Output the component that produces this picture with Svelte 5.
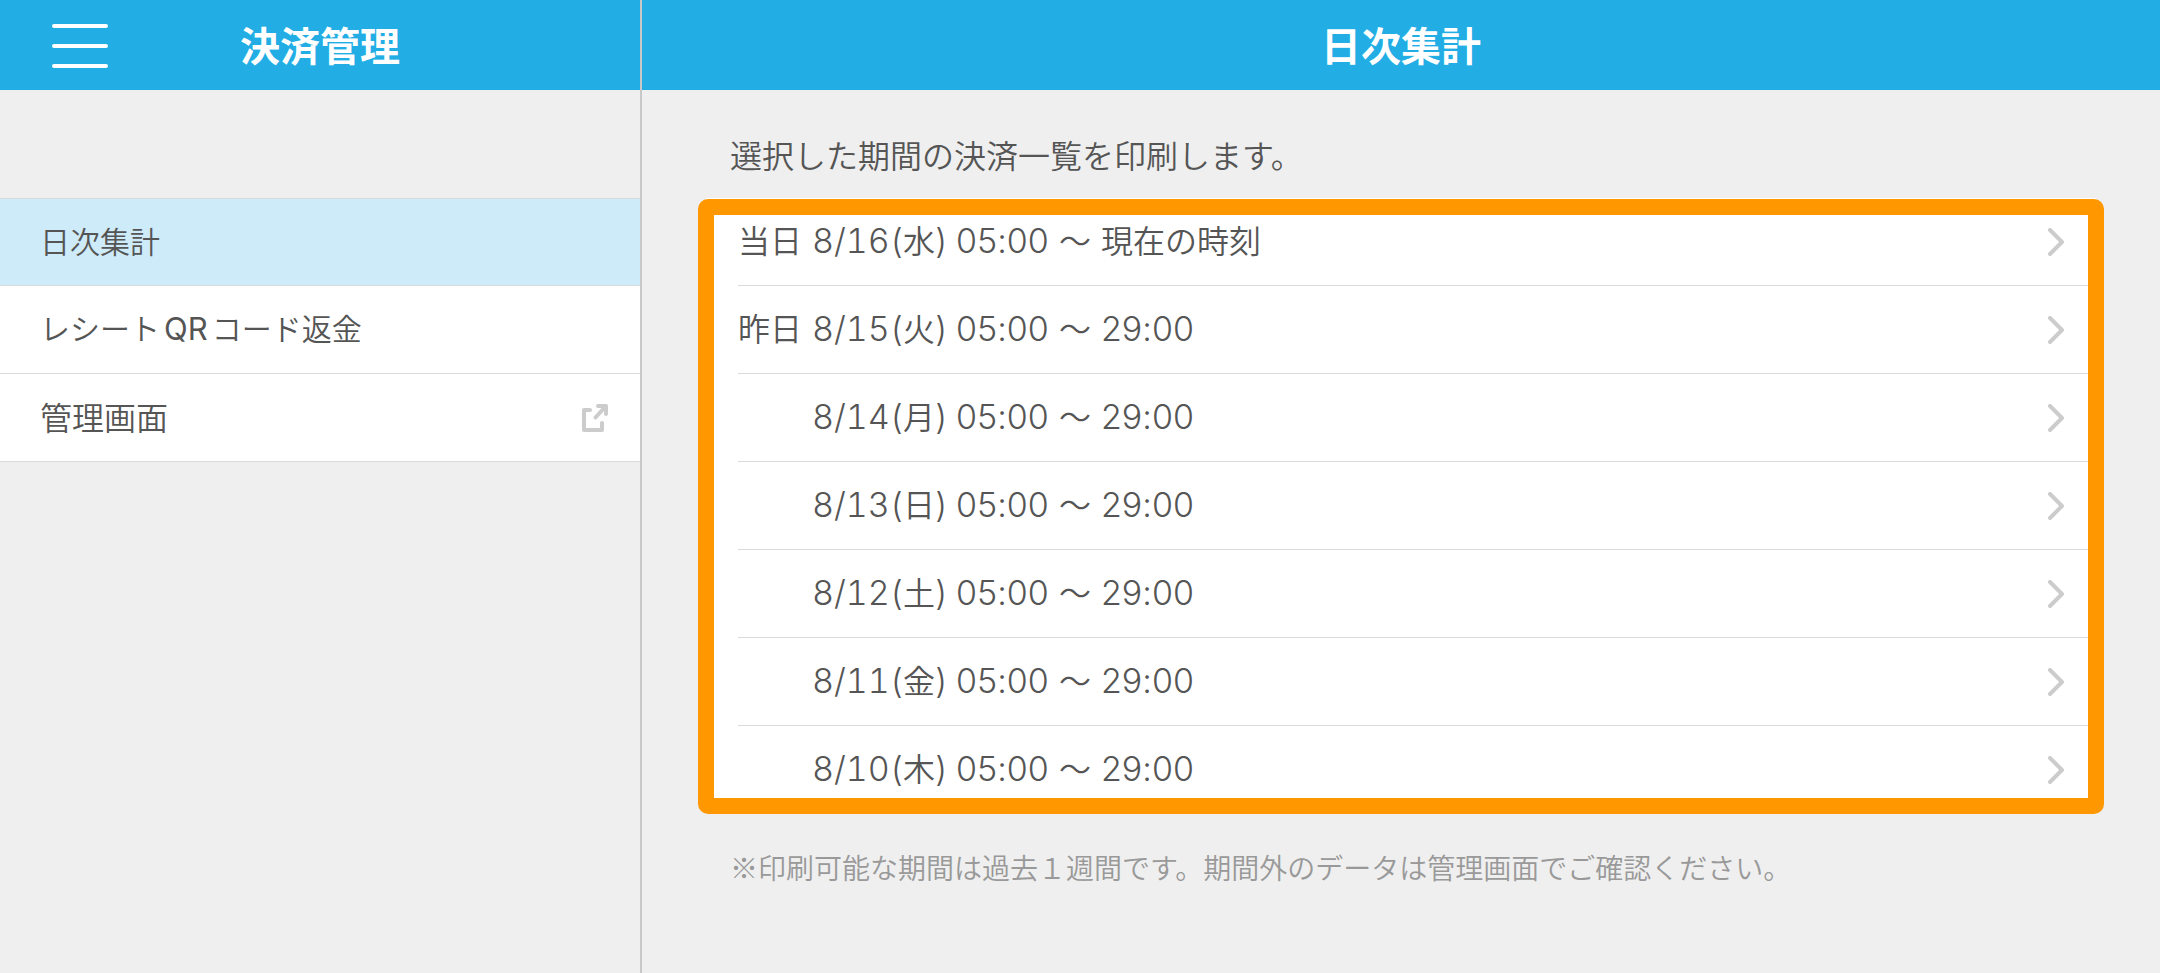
<script>
  const periods = [
    { label: '当日', date: '8/16', day: '水', to: '現在の時刻', now: true },
    { label: '昨日', date: '8/15', day: '火', to: '29:00' },
    { label: '', date: '8/14', day: '月', to: '29:00' },
    { label: '', date: '8/13', day: '日', to: '29:00' },
    { label: '', date: '8/12', day: '土', to: '29:00' },
    { label: '', date: '8/11', day: '金', to: '29:00' },
    { label: '', date: '8/10', day: '木', to: '29:00' }
  ];
</script>

<div class="app">
  <aside class="sidebar">
    <header class="bar">
      <button class="menu" aria-label="メニュー">
        <svg width="56" height="44" viewBox="0 0 56 44" stroke="#fff" stroke-width="4" stroke-linecap="round">
          <path d="M2 2H54M2 22H54M2 42H54" />
        </svg>
      </button>
      <h1>決済管理</h1>
    </header>
    <nav>
      <a class="item selected" href="#daily" aria-current="page">日次集計</a>
      <a class="item" href="#refund"><span>レシート<span class="latin">QR</span>コード返金</span></a>
      <a class="item wide" href="#admin">
        <span>管理画面</span>
        <svg width="26" height="28" viewBox="0 0 26 28" fill="none" stroke="#ccc" stroke-width="4" stroke-linecap="round" stroke-linejoin="round" aria-hidden="true">
          <path d="M8 6H2V26H20V19" />
          <path d="M16 2H24V10M23 3L13.500 13.500" />
        </svg>
      </a>
    </nav>
  </aside>

  <main>
    <header class="bar"><h1>日次集計</h1></header>
    <p class="lead">選択した期間の決済一覧を印刷します。</p>
    <div class="panel">
      <ul>
        {#each periods as p}
          <li>
            <button class="row">
              <span class="period">
                <span>{p.label}</span>
                <span><span class="num date">{p.date}(</span>{p.day}<span class="num">)</span></span>
                <span class="num">05:00</span>
                <span>～</span>
                <span class:num={!p.now}>{p.to}</span>
              </span>
              <svg width="16" height="28" viewBox="0 0 16 28" fill="none" stroke="#ccc" stroke-width="4" stroke-linecap="round" stroke-linejoin="round" aria-hidden="true">
                <path d="M2 2L14 14L2 26" />
              </svg>
            </button>
          </li>
        {/each}
      </ul>
    </div>
    <p class="note">※印刷可能な期間は過去１週間です。期間外のデータは管理画面でご確認ください。</p>
  </main>
</div>

<style>
  :global(body) {
    margin: 0;
    background: #efefef;
  }
  .app {
    display: flex;
    min-height: 100vh;
    background: #efefef;
    color: #555;
    font-family: 'Noto Sans CJK JP', sans-serif;
    font-size: 32px;
    font-weight: 350;
    line-height: 48px;
  }
  .app * {
    box-sizing: border-box;
  }
  .sidebar {
    flex: 0 0 642px;
    border-right: 2px solid #c8c8c8;
  }
  main {
    flex: 1;
    min-width: 0;
  }
  .bar {
    position: relative;
    display: flex;
    align-items: center;
    justify-content: center;
    height: 90px;
    padding-bottom: 2px;
    background: #22ade5;
    color: #fff;
  }
  h1 {
    margin: 0;
    font-size: 40px;
    font-weight: 700;
    line-height: 60px;
  }
  .menu {
    position: absolute;
    left: 52px;
    top: 24px;
    padding: 0;
    border: 0;
    background: none;
    cursor: pointer;
  }
  svg {
    display: block;
  }
  nav {
    margin-top: 108px;
    border-top: 1px solid #dadada;
  }
  .item {
    display: flex;
    align-items: center;
    justify-content: space-between;
    height: 88px;
    padding: 0 32px 0 40px;
    border-bottom: 1px solid #dadada;
    background: #fff;
    color: inherit;
    font-size: 30px;
    text-decoration: none;
  }
  .item > span {
    padding-bottom: 4px;
  }
  .selected {
    height: 87px;
    padding-bottom: 4px;
    background: #ceebf9;
  }
  .wide {
    font-size: 32px;
  }
  .latin {
    padding: 0 4px;
    font-family: Inter, sans-serif;
    font-size: 31px;
    font-weight: 400;
  }
  .lead {
    margin: 40px 88px 20px;
  }
  .panel {
    position: relative;
    margin: 0 56px;
    padding: 0 8px 8px;
  }
  .panel::after {
    content: '';
    position: absolute;
    inset: 1px 0 0;
    border: 16px solid #ff9800;
    border-radius: 10px;
    pointer-events: none;
  }
  ul {
    max-height: 608px;
    margin: 0;
    padding: 0 0 0 32px;
    overflow: hidden;
    background: #fff;
    list-style: none;
  }
  li {
    height: 88px;
    border-bottom: 1px solid #dadada;
  }
  .row {
    display: flex;
    align-items: center;
    justify-content: space-between;
    width: 100%;
    height: 100%;
    padding: 0 32px 0 0;
    border: 0;
    background: none;
    color: inherit;
    font: inherit;
    text-align: left;
    white-space: nowrap;
    cursor: pointer;
  }
  .period {
    display: grid;
    grid-template-columns: 74px 144px 103px 42px auto;
    align-items: baseline;
    padding-bottom: 4px;
  }
  .num {
    font-family: Inter, 'Noto Sans CJK JP', sans-serif;
    font-size: 34px;
    font-weight: 300;
    font-variant-ligatures: no-contextual;
  }
  .date {
    font-variant-numeric: tabular-nums;
  }
  .note {
    margin: 32px 88px;
    color: #999;
    font-size: 28px;
    line-height: 42px;
  }
</style>
